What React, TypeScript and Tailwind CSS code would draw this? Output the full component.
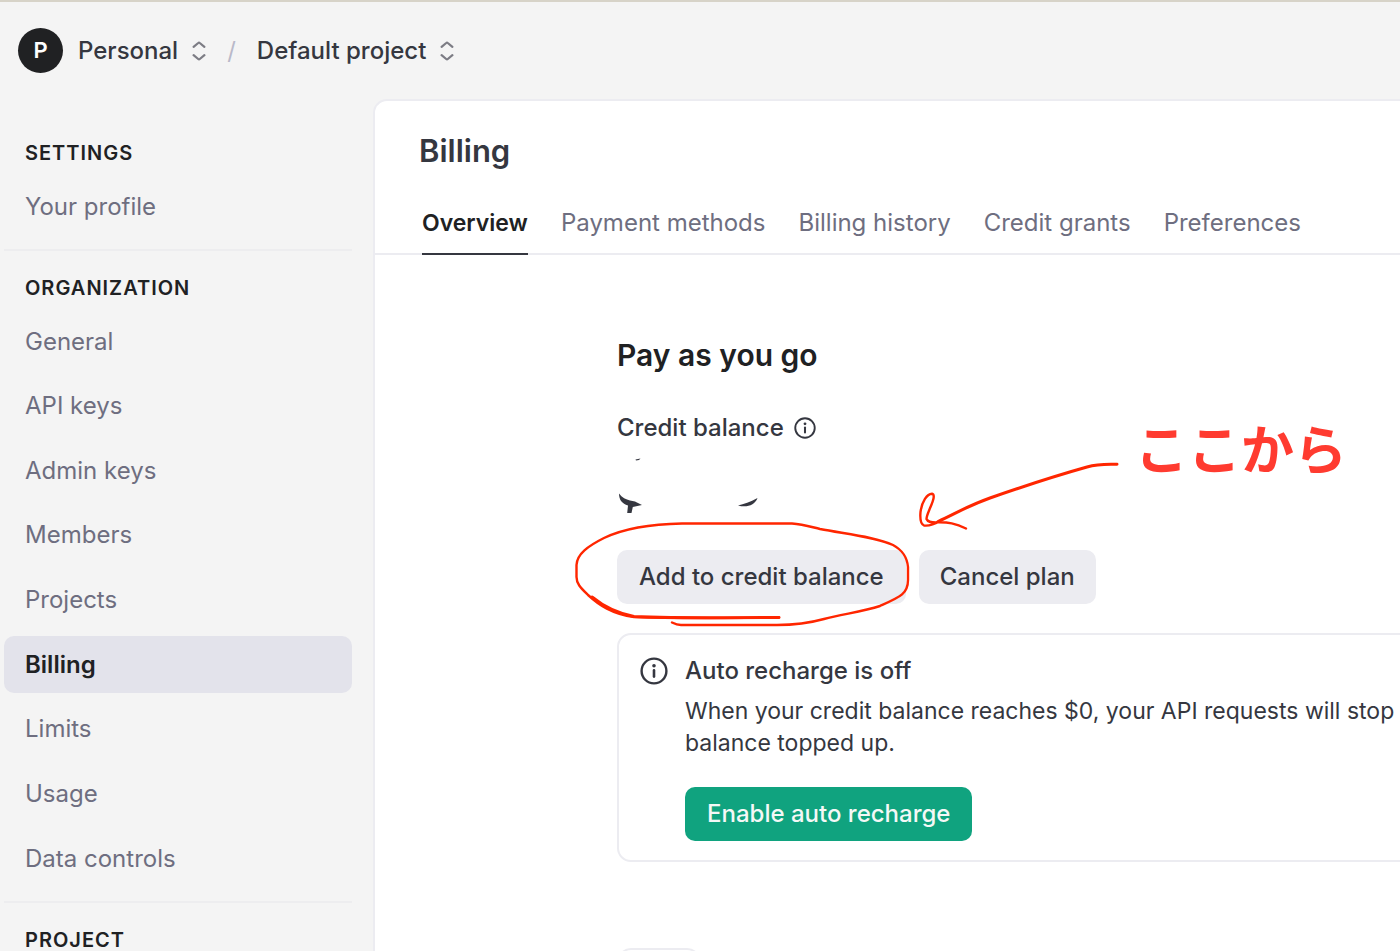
import { clsx } from "clsx";

type Section = { title: string; items: string[] };

const sections: Section[] = [
  { title: "SETTINGS", items: ["Your profile"] },
  {
    title: "ORGANIZATION",
    items: ["General", "API keys", "Admin keys", "Members", "Projects", "Billing", "Limits", "Usage", "Data controls"],
  },
  { title: "PROJECT", items: [] },
];

const tabs = ["Overview", "Payment methods", "Billing history", "Credit grants", "Preferences"];

function Chevrons() {
  return (
    <svg width="14" height="20" viewBox="0 0 14 20" fill="none" stroke="#7c7c84" strokeWidth="2.2" strokeLinecap="round" strokeLinejoin="round" aria-hidden="true">
      <path d="M1.6 5.8 6.2 2Q7 1.3 7.8 2L12.4 5.8M1.6 14.2 6.2 18Q7 18.7 7.8 18L12.4 14.2" />
    </svg>
  );
}

function InfoIcon({ className }: { className: string }) {
  return (
    <svg className={className} viewBox="0 0 28 28" fill="none" aria-hidden="true">
      <circle cx="14" cy="14" r="12.4" stroke="#353740" strokeWidth="2.4" />
      <circle cx="14" cy="8.7" r="1.8" fill="#353740" />
      <path d="M14 13.4v6.2" stroke="#353740" strokeWidth="2.6" strokeLinecap="round" />
    </svg>
  );
}

function Sidebar() {
  return (
    <nav className="w-[352px] shrink-0 pl-1 pt-[17px]" aria-label="Settings">
      {sections.map((section, i) => (
        <section key={section.title} className={clsx("pt-[25px]", i < sections.length - 1 && "border-b-2 border-[#ededef] pb-[14px]")}>
          <h2 className="mb-[13px] pl-[21px] text-[20px] font-semibold leading-6 tracking-wider text-[#202123]">{section.title}</h2>
          <ul className={clsx("flex flex-col justify-between", section.items.length > 1 && "h-[574px]")}>
            {section.items.map((item) => (
              <li key={item}>
                <a
                  href="#"
                  className={clsx(
                    "flex h-[57px] items-center rounded-[10px] pl-[21px] text-[24px]",
                    item === "Billing" ? "bg-[#e3e3eb] font-semibold text-[#202123]" : "text-[#6e6e80]",
                  )}
                >
                  {item}
                </a>
              </li>
            ))}
          </ul>
        </section>
      ))}
    </nav>
  );
}

function Annotations() {
  return (
    <>
      <svg className="pointer-events-none absolute -left-[57px] top-[185px] overflow-visible" width="560" height="200" viewBox="560 440 560 200" fill="none" stroke="#ff2600" strokeLinecap="round" strokeLinejoin="round" aria-hidden="true">
        <path strokeWidth="2.4" d="M779 617.5C730 618 660 618 634 617C612 614 599 605 588 595C581 588 576.5 584 576.5 577V565C577 554 588 546 604 538C625 528 650 524 682 523.5H792C802 524 808 526 820 529C846 534 876 537 893 545C902 550 907 556 908 567V580C908 594 900 597 880 606C862 612 842 614 824 619C806 624 790 625 777 625H681C677 625 675 624 672 622.5" />
        <path strokeWidth="3" d="M779 617.5C730 617.8 665 617.8 634 616.5C615 613 603 606 592 597" />
        <path strokeWidth="3" d="M1117 464.3C1103 464.5 1098 464 1087 467C1062 474 1010 491 990 498C965 507 955 514 938 521.5" />
        <path strokeWidth="2.4" d="M940 521C935 524 929 526 924 525.5C920 524 920 518 920.5 512C922 501 927 494 932 493.7C935.500 494.500 933 501 930.500 507C928.500 512 926.500 516 926.500 519C928 523 933 522.300 939 522.300C948 522.500 955 523 966 528.500" />
      </svg>
      <p className="absolute left-[518px] top-[165px] whitespace-nowrap text-[53px] font-bold leading-[54px] text-[#ff3b30] [font-family:'Noto_Sans_CJK_JP',sans-serif]" lang="ja">
        ここから
      </p>
    </>
  );
}

function Billing() {
  return (
    <main className="ml-[21px] min-w-0 flex-1 overflow-hidden rounded-tl-[14px] border-l-2 border-t-2 border-[#ececf1] bg-white">
      <h1 className="pl-11 pt-[30px] text-[31px] font-semibold leading-[40px] text-[#353740]">Billing</h1>
      <div className="mt-8 flex gap-[33px] border-b-2 border-[#ececf1] pl-[47px]" role="tablist">
        {tabs.map((tab, i) => (
          <button
            key={tab}
            type="button"
            role="tab"
            aria-selected={i === 0}
            className={clsx(
              "-mb-0.5 shrink-0 whitespace-nowrap border-b-2 pb-[14px] pt-1 leading-8",
              i === 0 ? "border-[#353740] text-[23px] font-semibold text-[#202123]" : "border-transparent text-[24px] text-[#6e6e80]",
            )}
          >
            {tab}
          </button>
        ))}
      </div>

      <div className="relative pl-[242px]">
        <div className="relative">
          <h2 className="pt-[78px] text-[30px] font-semibold leading-[44px] text-[#202123]">Pay as you go</h2>
          <div className="mt-[35px] flex items-center gap-2.5 text-[24px] font-medium leading-8 text-[#353740]">
            <h3>Credit balance</h3>
            <InfoIcon className="size-[22px]" />
          </div>
          <svg className="mt-[10px]" width="160" height="60" viewBox="617 454 160 60" fill="#353740" aria-hidden="true">
            <path d="M635.5 459.5 640.5 458.5 639 460 636 460.5Z" />
            <path d="M619 493.500C622 497.500 626 499.500 630 500.500L635 501.500 642 505 632.800 507 631.500 513H627.200L628 505.500C622 503.500 619 500 619 493.500Z" />
            <path d="M738 505.5C744 504 750 502 757.5 498C755 505 747 508 738 505.5Z" />
          </svg>
          <div className="mt-9 flex gap-[13px]">
            <button type="button" className="h-[54px] rounded-[10px] bg-[#ececf1] px-[22px] text-[24px] font-medium text-[#353740]">Add to credit balance</button>
            <button type="button" className="h-[54px] rounded-[10px] bg-[#ececf1] px-[21px] text-[24px] font-medium text-[#353740]">Cancel plan</button>
          </div>
          <Annotations />
        </div>

        <section className="-mr-4 mt-[29px] flex gap-[17px] rounded-[14px] border-2 border-[#ececf1] pb-[19px] pl-[21px] pt-5">
          <InfoIcon className="mt-0.5 size-7 shrink-0" />
          <div className="text-[24px] leading-8 text-[#353740]">
            <h3 className="font-medium">Auto recharge is off</h3>
            <p className="mt-2 whitespace-nowrap text-[23px]">
              When your credit balance reaches $0, your API requests will stop
              <br />
              balance topped up.
            </p>
            <button type="button" className="mt-7 h-[54px] rounded-[10px] bg-[#10a37f] px-[22px] font-medium text-[#f4f8f6]">Enable auto recharge</button>
          </div>
        </section>
        <div className="mt-[86px] h-[60px] w-[84px] rounded-[14px] border-2 border-[#ececf1]" />
      </div>
    </main>
  );
}

export default function App() {
  return (
    <div className="flex h-screen flex-col overflow-hidden border-t-2 border-[#d7d3c8] bg-[#f4f4f4] antialiased [font-family:Inter,'Noto_Sans_CJK_JP',sans-serif]">
      <header className="flex h-[97px] shrink-0 items-center pl-[18px] text-[24px] font-medium text-[#353740]">
        <span className="flex size-[45px] items-center justify-center rounded-full bg-[#202123] text-[22px] font-semibold text-white">P</span>
        <button type="button" className="ml-[15px] flex items-center gap-[14px]">
          Personal
          <Chevrons />
        </button>
        <span className="mx-[21px] font-normal text-[#b9b9c9]">/</span>
        <button type="button" className="flex items-center gap-[14px]">
          Default project
          <Chevrons />
        </button>
      </header>
      <div className="flex min-h-0 flex-1">
        <Sidebar />
        <Billing />
      </div>
    </div>
  );
}
